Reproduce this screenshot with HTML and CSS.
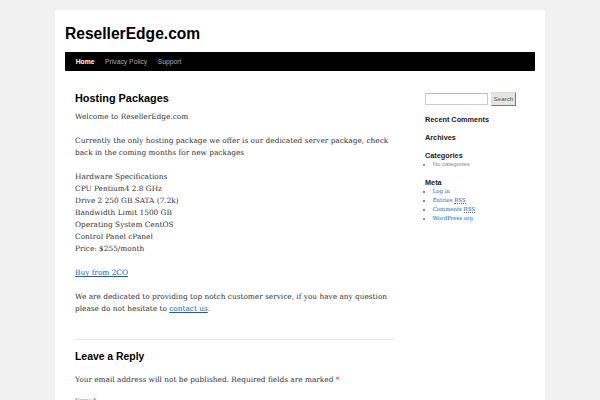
FILE: index.html
```html
<!DOCTYPE html>
<html lang="en">
<head>
<meta charset="utf-8">
<title>Hosting Packages | ResellerEdge.com</title>
<link rel="stylesheet" href="styles.css">
</head>
<body>
<div class="wrapper">
  <header class="header">
    <h1 class="site-title">ResellerEdge.com</h1>
    <nav class="access">
      <ul class="menu">
        <li class="current"><a href="#">Home</a></li>
        <li><a href="#">Privacy Policy</a></li>
        <li><a href="#">Support</a></li>
      </ul>
    </nav>
  </header>
  <div class="main">
    <div class="content">
      <article class="post">
        <h2 class="entry-title">Hosting Packages</h2>
        <div class="entry-content">
          <p>Welcome to ResellerEdge.com</p>
          <p>Currently the only hosting package we offer is our dedicated server package, check back in the coming months for new packages</p>
          <p>Hardware Specifications<br>CPU Pentium4 2.8 GHz<br>Drive 2 250 GB SATA (7.2k)<br>Bandwidth Limit 1500 GB<br>Operating System CentOS<br>Control Panel cPanel<br>Price: $255/month</p>
          <p><a href="#">Buy from 2CO</a></p>
          <p>We are dedicated to providing top notch customer service, if you have any question please do not hesitate to <a href="#">contact us</a>.</p>
        </div>
      </article>
      <section class="respond">
        <h3 class="reply-title">Leave a Reply</h3>
        <p class="comment-notes">Your email address will not be published. Required fields are marked <span class="required">*</span></p>
        <form class="comment-form">
          <label class="field-label" for="author">Name <span class="required">*</span></label>
          <input class="field-input" id="author" type="text">
        </form>
      </section>
    </div>
    <aside class="sidebar">
      <form class="search-form">
        <input class="search-input" type="text">
        <button class="search-button" type="button">Search</button>
      </form>
      <section class="widget">
        <h3 class="widget-title">Recent Comments</h3>
      </section>
      <section class="widget">
        <h3 class="widget-title">Archives</h3>
      </section>
      <section class="widget">
        <h3 class="widget-title">Categories</h3>
        <ul class="widget-list">
          <li class="cat-none">No categories</li>
        </ul>
      </section>
      <section class="widget">
        <h3 class="widget-title">Meta</h3>
        <ul class="widget-list">
          <li class="meta-item"><a href="#">Log in</a></li>
          <li class="meta-item"><a href="#">Entries <abbr title="Really Simple Syndication">RSS</abbr></a></li>
          <li class="meta-item"><a href="#">Comments <abbr title="Really Simple Syndication">RSS</abbr></a></li>
          <li class="meta-item"><a href="#">WordPress.org</a></li>
        </ul>
      </section>
    </aside>
  </div>
</div>
</body>
</html>
```

FILE: styles.css
```css
html {
  overflow: hidden;
}

body {
  margin: 0;
  background: #f1f1f1;
  font-family: "DejaVu Serif", serif;
  color: #333;
}

.wrapper {
  width: 470px;
  margin: 10px auto 0;
  padding: 0 10px 20px;
  background: #fff;
}

.header {
  padding-top: 14.5px;
}

.site-title {
  margin: 0 0 8.8px;
  font: bold 15.6px/18.7px "Liberation Sans", Arial, sans-serif;
  color: #000;
}

.access {
  background: #000;
  height: 19px;
}

.menu {
  display: flex;
  list-style: none;
  margin: 0 0 0 5.5px;
  padding: 0;
}

.menu a {
  display: block;
  padding: 0 5.2px;
  font: 6.8px/19px "Liberation Sans", Arial, sans-serif;
  color: #aaa;
  text-decoration: none;
}

.menu .current a {
  color: #fff;
  font-weight: bold;
}

.main {
  display: grid;
  grid-template-columns: 320px 110px;
  column-gap: 30px;
  padding: 20px 0 0 10px;
}

a {
  color: #0066cc;
}

.entry-title {
  margin: 0;
  font: bold 10.9px/14.2px "Liberation Sans", Arial, sans-serif;
  color: #000;
}

.entry-content {
  padding-top: 6px;
  font-size: 7.36px;
  line-height: 12px;
}

.entry-content p {
  margin: 0 0 12px;
}

.respond {
  border-top: 1px solid #e7e7e7;
  margin-top: 24px;
}

.reply-title {
  margin: 10.5px 0 0;
  font: bold 10.4px/12.5px "Liberation Sans", Arial, sans-serif;
  color: #000;
}

.comment-notes {
  margin: 11px 0 0;
  font-size: 7.36px;
  line-height: 12px;
}

.required {
  color: #ff4b33;
  font-weight: bold;
}

.comment-form {
  margin-top: 8.5px;
}

.field-label {
  display: block;
  font: 6.24px/9px "Liberation Sans", Arial, sans-serif;
  color: #888;
}

.field-input {
  display: block;
  width: 140px;
  height: 12px;
  box-sizing: border-box;
  border: 1px solid #ccc;
  background: #f9f9f9;
}

.sidebar {
  padding-top: 1px;
}

.search-form {
  display: flex;
  align-items: center;
  gap: 2.7px;
  margin: 0 0 9px;
}

.search-input {
  width: 63px;
  height: 12px;
  box-sizing: border-box;
  margin: 0;
  padding: 0;
  border: 1px solid #ccc;
  border-top-color: #bbb;
  background: #fff;
}

.search-button {
  width: 25.5px;
  height: 14px;
  box-sizing: border-box;
  margin: 0;
  padding: 0;
  font: 6.24px/12px "Liberation Sans", Arial, sans-serif;
  color: #555;
  background: #e6e4df;
  border: 1px solid;
  border-color: #ddd #777 #777 #ddd;
}

.widget {
  margin-bottom: 9px;
}

.widget-title {
  margin: 0;
  font: bold 7.3px/9px "Liberation Sans", Arial, sans-serif;
  color: #222;
}

.widget-list {
  margin: 0 0 0 7.7px;
  padding: 0;
  list-style: square;
  color: #888;
}

.cat-none {
  font: 6px/9px "Liberation Sans", Arial, sans-serif;
  color: #888;
}

.meta-item {
  font: 5.4px/9px "DejaVu Serif", serif;
}

.meta-item a {
  color: #0066cc;
  text-decoration: none;
}

abbr {
  text-decoration: none;
  border-bottom: 1px dotted #666;
}
```
